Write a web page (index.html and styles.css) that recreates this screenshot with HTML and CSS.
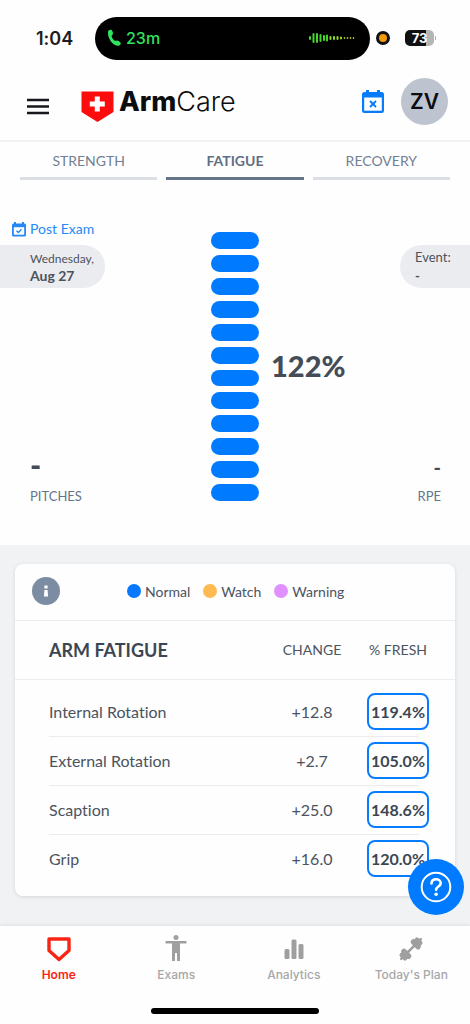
FILE: index.html
```html
<!DOCTYPE html>
<html lang="en">
<head>
<meta charset="utf-8">
<meta name="viewport" content="width=device-width, initial-scale=1">
<title>ArmCare</title>
<link rel="stylesheet" href="styles.css">
</head>
<body>
<div class="status">
  <span class="time">1:04</span>
  <div class="island">
    <svg class="phone" width="14" height="18" viewBox="0 0 14 18" fill="#30e35f"><path d="M1 3.2C1.200 1 3.600.2 4.800 1.300c1 1 1.500 3 .9 4.100-.5.900-1.200.9-1.100 1.800.3 1.600 1.800 3.700 3.300 4.500.9.400 1.200-.3 2.200-.3 1.300.1 3.300 1.500 3.600 2.800.3 1.500-1.400 2.800-3.200 2.600C5.200 16.200.5 8.800 1 3.200z"/></svg>
    <span>23m</span>
    <svg class="wave" width="46" height="12" viewBox="0 0 46 12" fill="none" stroke-width="2" stroke-linecap="round"><path stroke="#43d629" d="M1 5v2M4.500 2v8M8 2v8M11.500 3v6M15 4v4M18 3.500v5"/><path stroke="#8cda2b" d="M21.500 5v2M25 5v2M28.500 5v2M32 5.500v1"/><path stroke="#c0ca28" stroke-width="1.500" d="M35.500 5.800v.4M38.500 5.800v.4M41.500 5.800v.4M44.500 5.800v.4"/></svg>
  </div>
  <span class="mic"></span>
  <span class="battery">73</span>
</div>
<header class="header">
  <button class="icon-button" aria-label="Menu"><svg width="22" height="18" viewBox="0 0 22 18" stroke="#15171c" stroke-width="2.400"><path d="M0 2h22M0 8.500h22M0 15h22"/></svg></button>
  <a class="brand" href="#"><svg width="33" height="32" viewBox="0 0 33 32"><path fill="#fb0d0d" d="M.5.500h32v20.500L16.500 31 .5 21z"/><path fill="#fff" d="M13.800 5.500h5v5h5v5h-5v5h-5v-5h-5v-5h5z"/></svg><span class="word"><b>Arm</b>Care</span></a>
  <button class="icon-button" aria-label="Cancel scheduled exam"><svg width="22" height="24" viewBox="0 0 22 24"><path fill="#087cf8" d="M4 0h3v2h8V0h3v2h1.500A2.500 2.500 0 0 1 22 4.500v16a2.500 2.500 0 0 1-2.500 2.500h-17A2.500 2.500 0 0 1 0 20.500v-16A2.500 2.500 0 0 1 2.500 2H4z"/><path fill="#fff" d="M2.200 7.500h17.600v13.200H2.200z"/><path stroke="#087cf8" stroke-width="1.900" d="m8 11 6 6m0-6-6 6"/></svg></button>
  <button class="avatar">ZV</button>
</header>
<nav class="tabs">
  <a href="#">STRENGTH</a>
  <a href="#" class="current" aria-current="page">FATIGUE</a>
  <a href="#">RECOVERY</a>
</nav>
<main>
  <section class="hero">
    <div class="side left">
      <a class="exam" href="#"><svg width="14" height="15" viewBox="0 0 14 15"><path fill="#2589f5" d="M2 0h2v1.500h6V0h2v1.500h.5A1.500 1.500 0 0 1 14 3v10a1.500 1.500 0 0 1-1.500 1.500h-11A1.500 1.500 0 0 1 0 13V3a1.500 1.500 0 0 1 1.500-1.500H2z"/><path fill="#fff" d="M1.800 5.200h10.400v7.500H1.800z"/><path fill="none" stroke="#2589f5" stroke-width="1.400" d="m4.500 8.800 1.800 1.700 3.200-3.300"/></svg>Post Exam</a>
      <div class="pill date"><span>Wednesday,</span><b>Aug 27</b></div>
      <div class="metric"><b class="large">-</b><span>PITCHES</span></div>
    </div>
    <div class="meter"><i></i><i></i><i></i><i></i><i></i><i></i><i></i><i></i><i></i><i></i><i></i><i></i></div>
    <div class="side right">
      <div class="pill event"><span>Event:</span><b>-</b></div>
      <strong class="score">122%</strong>
      <div class="metric"><b>-</b><span>RPE</span></div>
    </div>
  </section>
  <section class="details">
    <div class="card">
      <div class="legend">
        <button class="info" aria-label="Information"><svg width="28" height="28" viewBox="0 0 28 28"><circle cx="14" cy="14" r="14" fill="#7c8da3"/><path fill="#fff" d="M12.400 8.500h3.200v3h-3.200zM12.400 13h3.200l.5 6.500h-4.200z"/></svg></button>
        <ul>
          <li class="normal">Normal</li>
          <li class="watch">Watch</li>
          <li class="warning">Warning</li>
        </ul>
      </div>
      <table>
        <thead><tr><th scope="col">ARM FATIGUE</th><th scope="col">CHANGE</th><th scope="col">% FRESH</th></tr></thead>
        <tbody>
          <tr><td>Internal Rotation</td><td>+12.8</td><td><span class="value">119.4%</span></td></tr>
          <tr><td>External Rotation</td><td>+2.7</td><td><span class="value">105.0%</span></td></tr>
          <tr><td>Scaption</td><td>+25.0</td><td><span class="value">148.6%</span></td></tr>
          <tr><td>Grip</td><td>+16.0</td><td><span class="value">120.0%</span></td></tr>
        </tbody>
      </table>
    </div>
  </section>
</main>
<button class="help" aria-label="Help"><svg width="32" height="32" viewBox="0 0 32 32" fill="none" stroke="#fff" stroke-width="2"><circle cx="16" cy="16" r="14.300"/><path stroke-width="2.600" stroke-linecap="round" d="M11.500 12.500c.1-2.700 2-4.200 4.600-4.200 2.700 0 4.600 1.600 4.600 3.900 0 3.300-4.600 3.400-4.600 6.600"/><circle cx="16.100" cy="23.300" r="1.800" fill="#fff" stroke="none"/></svg></button>
<footer class="bottom">
  <nav>
    <a href="#" class="active"><svg width="26" height="28" viewBox="0 0 26 28" fill="none" stroke="#fa2415" stroke-width="3.400" stroke-linejoin="round"><path d="M3 4h20v11.500L13 24.500 3 15.500z"/></svg>Home</a>
    <a href="#"><svg width="26" height="28" viewBox="0 0 26 28" fill="#9f9f9f"><circle cx="13" cy="2.500" r="2.500"/><path d="M2.500 6h21v2.500H17V26h-3v-8h-2v8H9V8.500H2.500z"/></svg>Exams</a>
    <a href="#"><svg width="26" height="28" viewBox="0 0 26 28" fill="#9f9f9f"><rect x="3.500" y="14" width="5" height="10" rx="1.500"/><rect x="10.500" y="4.500" width="5" height="19.500" rx="1.500"/><rect x="17.500" y="9" width="5" height="15" rx="1.500"/></svg>Analytics</a>
    <a href="#"><svg width="26" height="28" viewBox="0 0 26 28" fill="#9f9f9f"><g transform="rotate(-45 13 14)"><rect x="-2" y="12.700" width="30" height="2.600" rx="1"/><rect x="0" y="9.500" width="5" height="9" rx="2"/><rect x="3.500" y="8" width="5.500" height="12" rx="2.500"/><rect x="17" y="8" width="5.500" height="12" rx="2.500"/><rect x="21" y="9.500" width="5" height="9" rx="2"/></g></svg>Today's Plan</a>
  </nav>
  <div class="indicator"></div>
</footer>
</body>
</html>
```
FILE: styles.css
```css
* { box-sizing: border-box; }
body {
  margin: 0;
  min-height: 100vh;
  display: flex;
  flex-direction: column;
  background: #fefefe;
  color: #4b535e;
  font-family: Lato, "Liberation Sans", sans-serif;
  font-variant-ligatures: none;
}
svg { display: block; flex: none; }
a { color: inherit; text-decoration: none; }
button { padding: 0; border: 0; background: none; font: inherit; color: inherit; cursor: pointer; }

.status {
  display: flex;
  align-items: center;
  height: 78px;
  padding: 0 36px 2px;
  color: #1d1d1f;
  font-family: Inter, sans-serif;
}
.time { width: 59px; font-size: 18px; font-weight: 600; }
.island {
  flex: 1;
  display: flex;
  align-items: center;
  gap: 5px;
  height: 43px;
  padding: 0 15px 0 12px;
  border-radius: 22px;
  background: #000;
  color: #30e35f;
  font-size: 16px;
  font-weight: 500;
}
.wave { margin-left: auto; }
.mic { width: 14px; height: 14px; margin: 0 15px 0 6px; border: 3px solid #111; border-radius: 50%; background: #f39a0b; }
.battery {
  position: relative;
  width: 29px;
  height: 16px;
  border-radius: 5px;
  background: linear-gradient(90deg, #111 74%, #b4b6b5 74%);
  color: #fff;
  font-size: 13px;
  font-weight: 700;
  line-height: 16px;
  text-align: center;
}
.battery::after { content: ""; position: absolute; right: -2px; top: 6px; width: 1px; height: 4px; background: #b4b6b5; }

.header {
  display: flex;
  align-items: center;
  height: 64px;
  padding: 0 22px 16px 27px;
  border-bottom: 2px solid #f1f1f3;
}
.header .icon-button { padding-top: 2px; }
.header .icon-button:first-child { padding-top: 12px; }
.brand { display: flex; align-items: center; gap: 5px; margin: 11px auto 0 32px; color: #0c0d0f; font: 300 27px/30px Inter, sans-serif; }
.word { padding-bottom: 9px; }
.brand b { font-weight: 800; }
.avatar { width: 47px; height: 47px; margin-left: 17px; border-radius: 50%; background: #bdc4cf; color: #0c0d0f; font: 600 21px/47px Inter, sans-serif; }

.tabs { display: grid; grid-template-columns: repeat(3, 1fr); gap: 9px; padding: 0 20px; }
.tabs a { height: 38px; padding-top: 10px; border-bottom: 3px solid #dbdfe5; color: #718093; font-size: 14px; line-height: 18px; text-align: center; }
.tabs .current { border-color: #64748b; color: #5f6f85; font-weight: 700; }

main { flex: 1; display: flex; flex-direction: column; }
.hero { display: grid; grid-template-columns: 1fr 48px 1fr; height: 365px; padding: 40px 0; }
.side { display: flex; flex-direction: column; }
.exam { display: flex; align-items: center; gap: 4px; padding-left: 12px; color: #2589f5; font-size: 14px; line-height: 18px; }
.pill { display: flex; flex-direction: column; height: 43px; margin-top: 7px; background: #ebecf0; font-size: 13px; line-height: 17px; }
.date { align-self: flex-start; width: 105px; padding: 5px 0 0 30px; border-radius: 0 22px 22px 0; font-size: 12px; }
.date b { font-size: 14px; }
.event { align-self: flex-end; width: 70px; margin-top: 25px; padding: 4px 0 0 15px; border-radius: 22px 0 0 22px; }
.event b { line-height: 20px; }
.metric { display: flex; flex-direction: column; margin-top: auto; color: #64748b; font-size: 13px; line-height: 18px; }
.metric b { padding-bottom: 4px; color: #444c57; font-size: 20px; line-height: 32px; }
.metric .large { padding-bottom: 6px; font-size: 30px; font-weight: 900; }
.left .metric { padding-left: 30px; }
.right .metric { padding-right: 29px; text-align: right; }
.score { margin: 60px 0 0 12px; color: #444c57; font-size: 29px; line-height: 36px; font-weight: 900; }
.meter { display: flex; flex-direction: column; gap: 6px; margin: 12px 0 4px; }
.meter i { flex: 1; border-radius: 9px; background: #007aff; }

.details { flex: 1; padding: 19px 15px 30px; background: #f1f2f4; }
.card { padding-bottom: 12px; border-radius: 8px; background: #fefefe; box-shadow: 0 1px 4px #0000001c; }
.legend { display: flex; align-items: center; height: 57px; padding: 0 0 2px 17px; border-bottom: 1px solid #edeef2; }
.legend ul { display: flex; gap: 13px; margin: 0 0 0 67px; padding: 0; list-style: none; font-size: 14px; }
.legend li { display: flex; align-items: center; gap: 4px; }
.legend li::before { content: ""; width: 14px; height: 14px; border-radius: 50%; background: currentColor; }
.normal::before { color: #0879ff; }
.watch::before { color: #ffba52; }
.warning::before { color: #df91ff; }
table { width: 100%; border-collapse: collapse; }
th { height: 58px; padding: 0; border-bottom: 1px solid #edeef2; font-size: 14px; font-weight: 400; }
th:first-child { color: #3c4652; font-size: 18px; font-weight: 700; }
th:first-child, td:first-child { padding-left: 34px; text-align: left; }
th:nth-child(2), td:nth-child(2) { width: 86px; }
th:last-child, td:last-child { width: 100px; padding-right: 14px; }
td { height: 49px; padding: 0 0 2px; font-size: 16px; text-align: center; }
tbody::before { content: ""; display: block; height: 8px; }
tbody tr:not(:last-child) { background: linear-gradient(#ebecf0, #ebecf0) 34px 100% / calc(100% - 70px) 1px no-repeat; }
.value { display: block; width: 62px; height: 37px; margin: 0 auto; border: 2px solid #087cff; border-radius: 8px; color: #3c4652; font-weight: 700; line-height: 33px; }

.help { position: fixed; right: 6px; bottom: 109px; z-index: 2; display: grid; place-items: center; width: 56px; height: 56px; border-radius: 50%; background: #007aff; }
.bottom { position: sticky; bottom: 0; padding-bottom: 10px; background: #fefefe; box-shadow: 0 -1px 3px #00000014; font-family: Inter, sans-serif; }
.bottom nav { display: grid; grid-template-columns: repeat(4, 1fr); height: 82px; padding-top: 9px; }
.bottom a { display: flex; flex-direction: column; align-items: center; gap: 4px; color: #a7a7a9; font-size: 12px; font-weight: 500; line-height: 16px; }
.bottom .active { color: #fa2415; font-weight: 600; }
.indicator { width: 168px; height: 6px; margin: 0 auto; border-radius: 3px; background: #000; }
```
